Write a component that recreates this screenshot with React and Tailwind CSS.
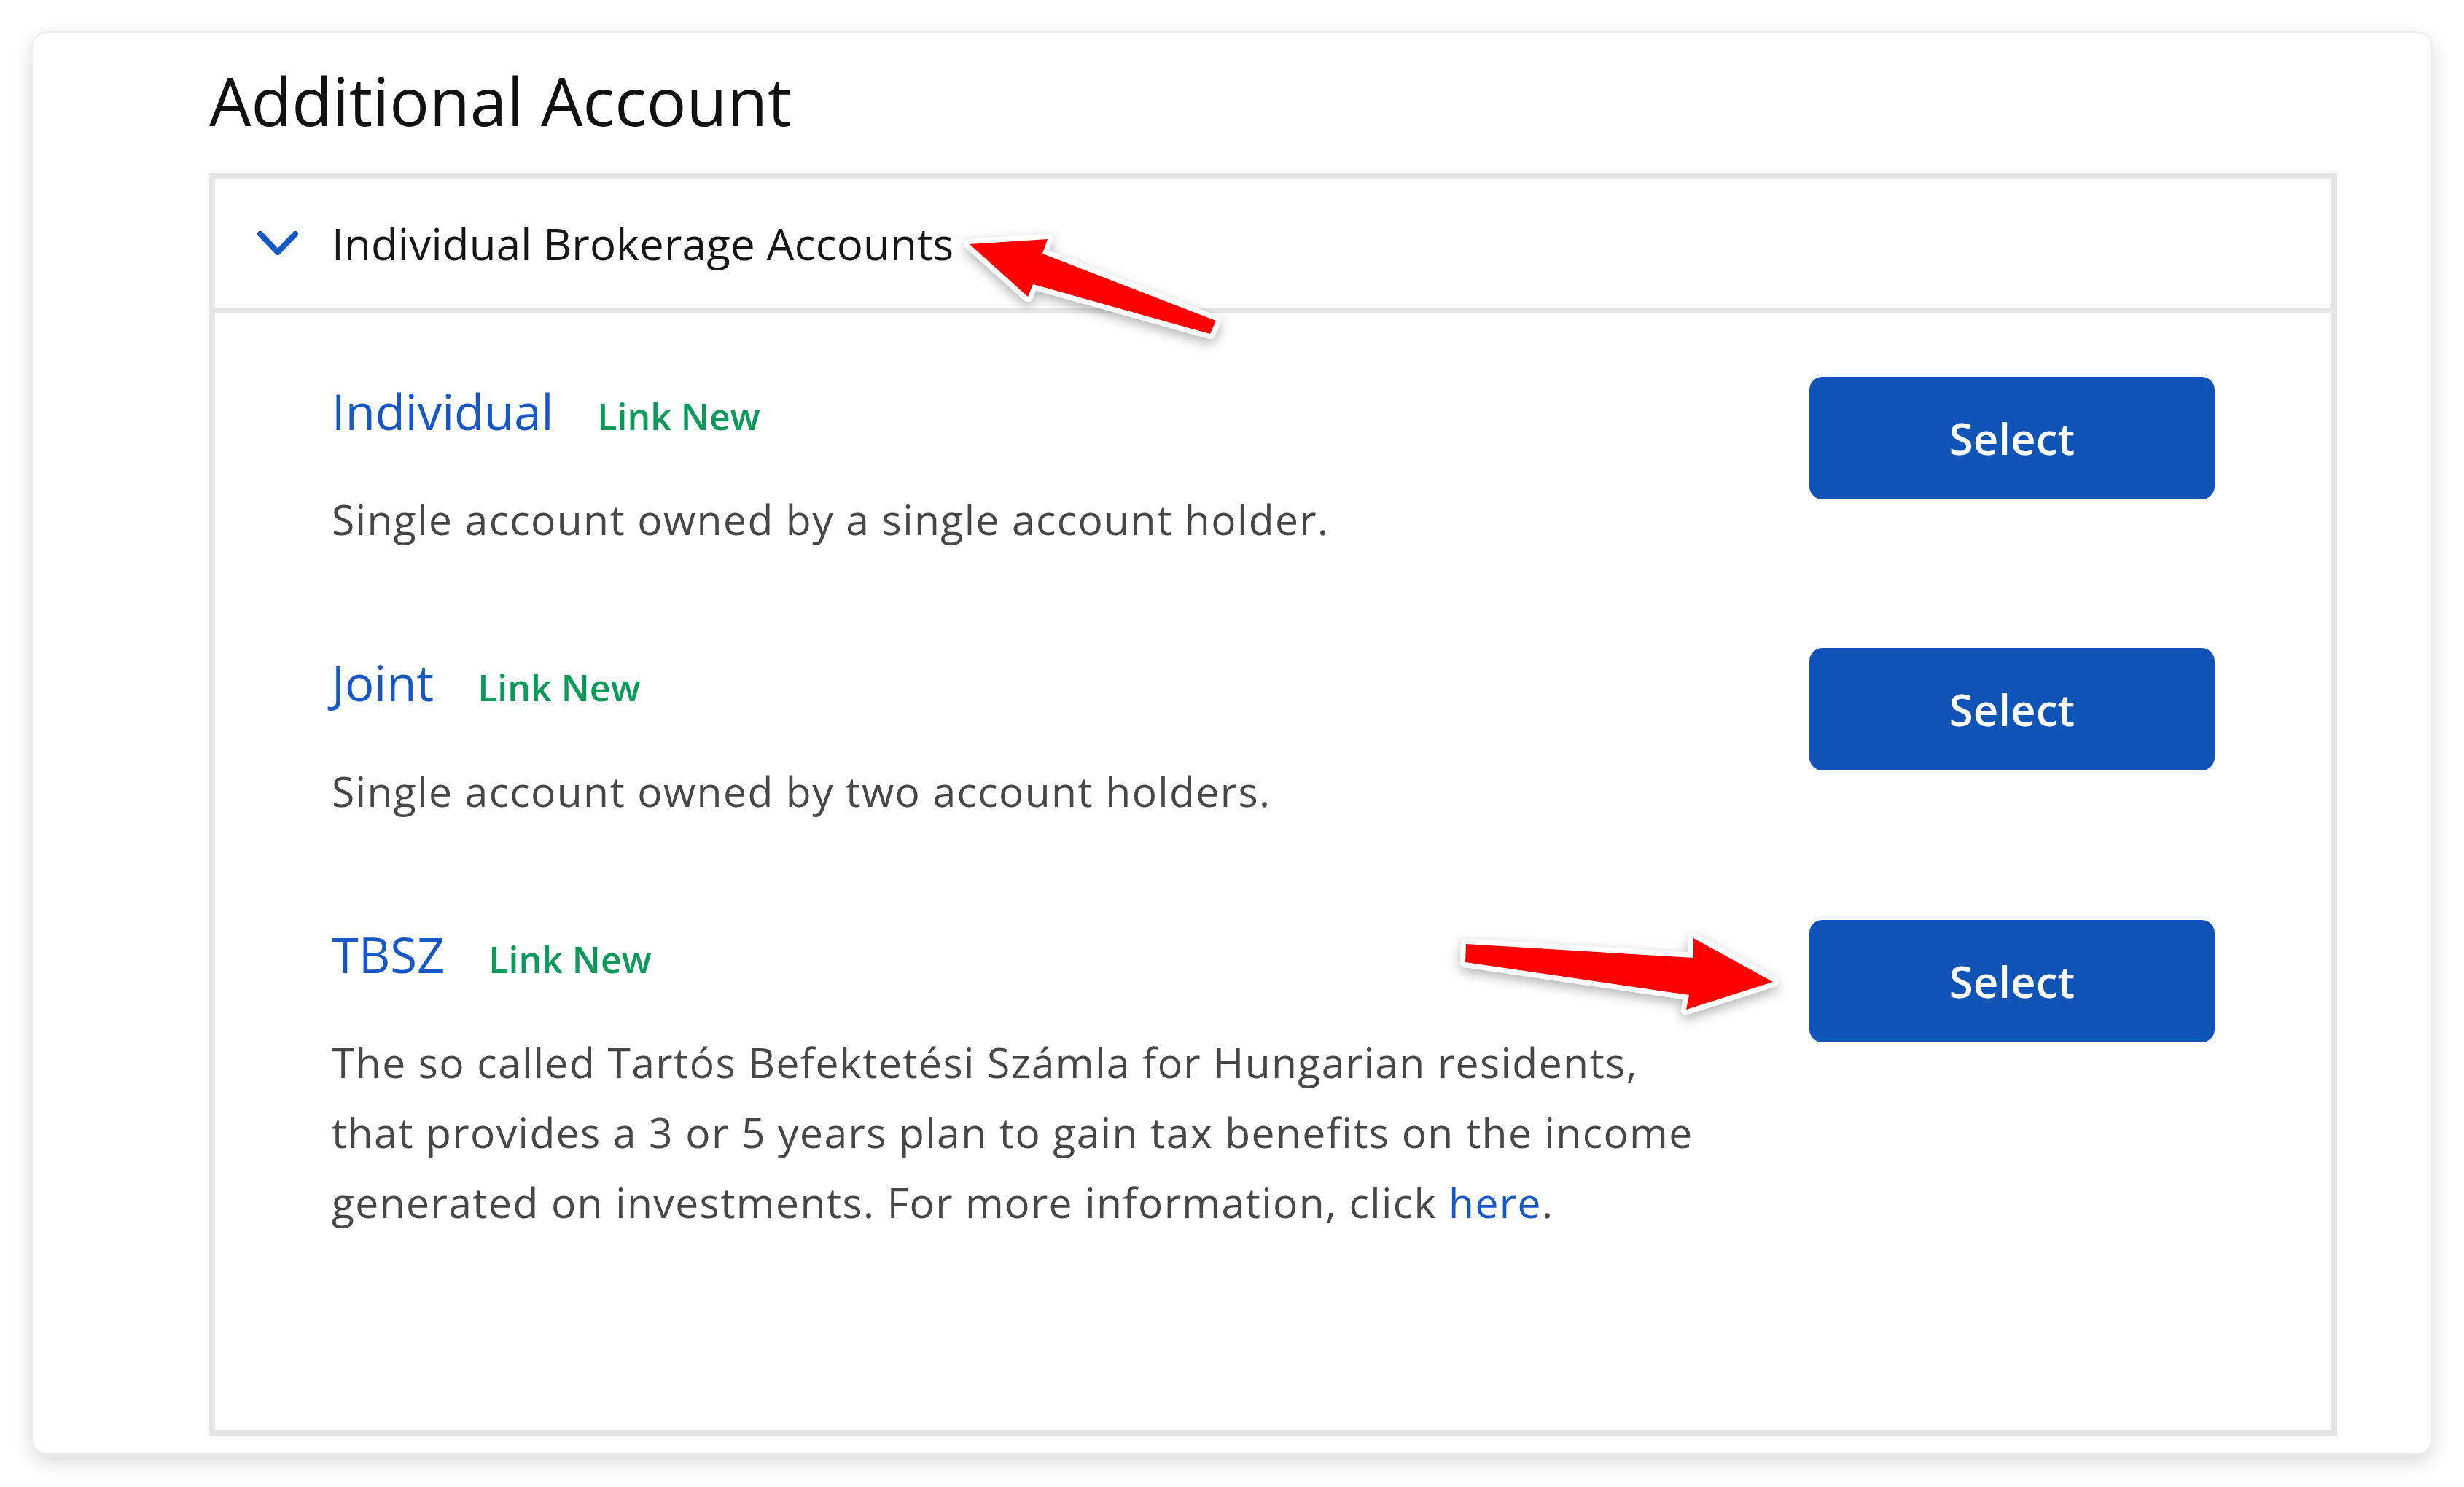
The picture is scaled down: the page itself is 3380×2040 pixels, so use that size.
import React from "react";

function Chevron() {
  return (
    <svg width="56" height="34" viewBox="0 0 56 34" className="shrink-0">
      <polyline points="4,4 28,29 52,4" fill="none" stroke="#1358c4" strokeWidth="8" strokeLinecap="round" strokeLinejoin="round" />
    </svg>
  );
}

function Row({ title, children, first }) {
  return (
    <div className={"flex items-start justify-between " + (first ? "" : "mt-[129px]")}>
      <div className="pt-[7px] flex-1">
        <div className="flex items-baseline gap-[60px]">
          <span className="text-[67px] leading-[1.2] text-[#1658c5]">{title}</span>
          <span className="text-[50px] font-semibold leading-[1.2] text-[#0b9a5a]">Link New</span>
        </div>
        <div className="mt-[60px] text-[57px] leading-[96px] tracking-[1.4px] text-[#474747]">{children}</div>
      </div>
      <button className="w-[556px] h-[168px] shrink-0 rounded-[18px] bg-[#1154b7] text-white text-[60px] font-semibold">
        Select
      </button>
    </div>
  );
}

export default function App() {
  return (
    <div className="relative w-[3380px] h-[2040px] bg-white overflow-hidden" style={{ fontFamily: "'Open Sans', Lato, sans-serif" }}>
      <div className="pt-[43px] pl-[43px]">
        <div className="w-[3294px] h-[1953px] rounded-[22px] border-2 border-[#ececec] bg-white shadow-[0_10px_28px_rgba(0,0,0,0.14)] pl-[242px] pt-[48px]">
          <h1 className="text-[91px] leading-[91px] text-[#111]">Additional Account</h1>
          <div className="mt-[54px] w-[2919px] h-[1732px] border-[8px] border-[#e6e6e6] flex flex-col">
            <div className="h-[184px] shrink-0 border-b-[8px] border-[#e6e6e6] flex items-center pl-[58px] gap-[46px]">
              <Chevron />
              <span className="text-[60px] tracking-[0.2px] text-[#161616]">Individual Brokerage Accounts</span>
            </div>
            <div className="pt-[87px] pl-[160px] pr-[160px]">
              <Row title="Individual" first>Single account owned by a single account holder.</Row>
              <Row title="Joint">Single account owned by two account holders.</Row>
              <Row title="TBSZ">
                The so called Tartós Befektetési Számla for Hungarian residents,
                <br />
                that provides a 3 or 5 years plan to gain tax benefits on the income
                <br />
                generated on investments. For more information, click <span className="text-[#1658c5]">here</span>.
              </Row>
            </div>
          </div>
        </div>
      </div>
      <svg className="absolute inset-0 pointer-events-none" width="3380" height="2040" viewBox="0 0 3380 2040">
        <defs>
          <filter id="sh" x="-20%" y="-20%" width="140%" height="160%">
            <feDropShadow dx="0" dy="6" stdDeviation="8" floodColor="#000" floodOpacity="0.3" />
          </filter>
        </defs>
        <polygon
          points="1330,335 1437,328 1430,348 1668,440 1660,458 1417,390 1410,407"
          fill="#ff0000"
          stroke="#fff"
          strokeWidth="14"
          strokeLinejoin="round"
          paintOrder="stroke"
          filter="url(#sh)"
        />
        <polygon
          points="2011,1295 2323,1314 2323,1287 2432,1347 2313,1385 2317,1365 2010,1320"
          fill="#ff0000"
          stroke="#fff"
          strokeWidth="14"
          strokeLinejoin="round"
          paintOrder="stroke"
          filter="url(#sh)"
        />
      </svg>
    </div>
  );
}
